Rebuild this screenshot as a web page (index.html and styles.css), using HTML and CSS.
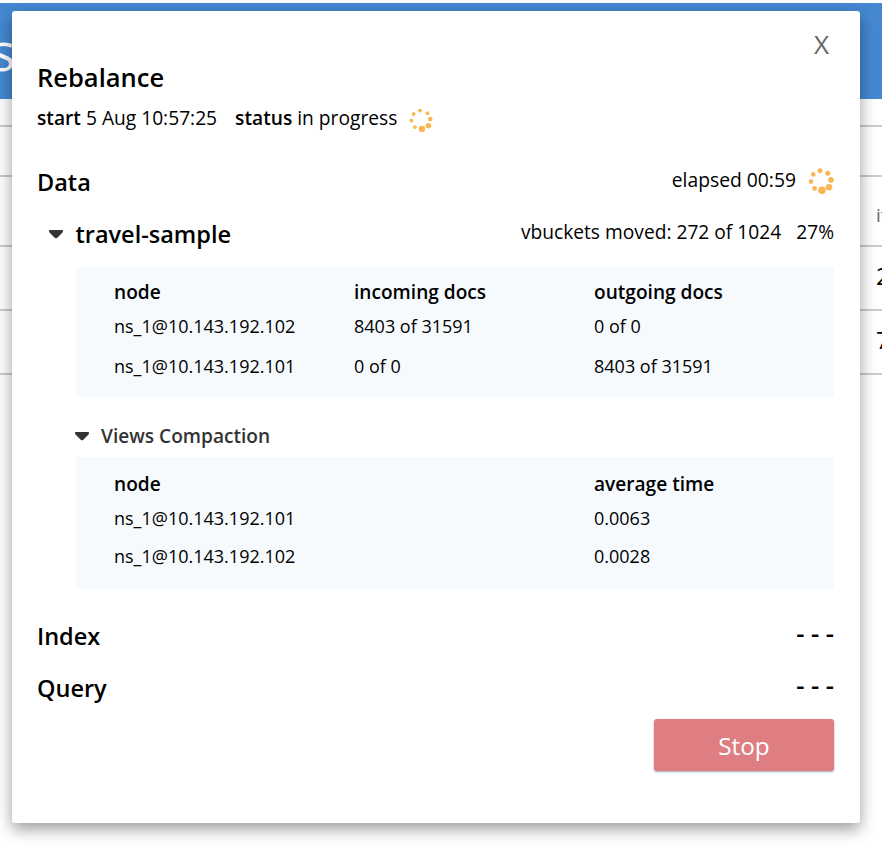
FILE: index.html
```html
<!DOCTYPE html>
<html lang="en">
<head>
<meta charset="utf-8">
<title>Rebalance</title>
<link rel="stylesheet" href="styles.css">
</head>
<body>
<div class="page">
  <header class="banner"><span>s</span></header>
  <div class="rule-row tabs"></div>
  <div class="rule-row filters"></div>
  <div class="rule-row heads"><span class="cell">items</span></div>
  <div class="rule-row item"><span class="cell">2</span></div>
  <div class="rule-row item"><span class="cell">7</span></div>
</div>
<main class="dialog">
  <div class="close-row"><span class="close">X</span></div>
  <h1 class="title"><span>Rebalance</span></h1>
  <div class="status-row">
    <span class="start"><b>start</b> 5 Aug 10:57:25</span>
    <span class="status"><b>status</b> in progress</span>
    <svg class="spin small" viewBox="0 0 26 26"><circle cx="12" cy="2.8" r="2.1"/><circle cx="20" cy="5.7" r="2.1"/><circle cx="23" cy="12" r="2.5"/><circle cx="21" cy="19.3" r="3"/><circle cx="14" cy="22.8" r="3.5"/><circle cx="6.3" cy="20.7" r="2.1"/><circle cx="2.7" cy="13.7" r="2.1"/><circle cx="5" cy="6.5" r="2.1"/></svg>
  </div>
  <section class="section data">
    <h2><span>Data</span></h2>
    <div class="elapsed"><span>elapsed 00:59</span>
      <svg class="spin" viewBox="0 0 26 26"><circle cx="12" cy="2.8" r="2.5"/><circle cx="19.7" cy="5.2" r="2.5"/><circle cx="23" cy="11.8" r="2.9"/><circle cx="21" cy="19.2" r="3.3"/><circle cx="14" cy="22.3" r="3.8"/><circle cx="6.6" cy="20.4" r="2.4"/><circle cx="3" cy="13.6" r="2.3"/><circle cx="5.3" cy="6.4" r="2.3"/></svg>
    </div>
  </section>
  <div class="section bucket">
    <h3><svg class="caret" viewBox="0 0 14 9"><path d="M.6 0H13.4Q14.2 0 14 1.2Q13.8 2.2 13 2.9L8 7.9Q7 8.7 6 7.9L1 2.9Q.2 2.2 0 1.2Q-.2 0 .6 0Z"/></svg><span>travel-sample</span></h3>
    <div class="moved"><span>vbuckets moved: 272 of 1024</span><span>27%</span></div>
  </div>
  <div class="panel docs">
    <b>node</b><b>incoming docs</b><b>outgoing docs</b>
    <span>ns_1@10.143.192.102</span><span>8403 of 31591</span><span>0 of 0</span>
    <span>ns_1@10.143.192.101</span><span>0 of 0</span><span>8403 of 31591</span>
  </div>
  <h4 class="views"><svg class="caret" viewBox="0 0 14 9"><path d="M.6 0H13.4Q14.2 0 14 1.2Q13.8 2.2 13 2.9L8 7.9Q7 8.7 6 7.9L1 2.9Q.2 2.2 0 1.2Q-.2 0 .6 0Z"/></svg><span>Views Compaction</span></h4>
  <div class="panel times">
    <b>node</b><b>average time</b>
    <span>ns_1@10.143.192.101</span><span>0.0063</span>
    <span>ns_1@10.143.192.102</span><span>0.0028</span>
  </div>
  <section class="section index"><h2><span>Index</span></h2><span class="dashes">- - -</span></section>
  <section class="section query"><h2><span>Query</span></h2><span class="dashes">- - -</span></section>
  <div class="actions"><button class="stop">Stop</button></div>
</main>
</body>
</html>
```
FILE: styles.css
```css
* { box-sizing: border-box; }
body {
  margin: 0;
  height: 852px;
  overflow: hidden;
  position: relative;
  background: #fff;
  color: #000;
  font-family: "Open Sans", sans-serif;
  font-size: 19px;
}
h1, h2, h3, h4 { margin: 0; font-weight: 600; }
b { font-weight: 600; }
.page { padding-top: 3px; }
.banner {
  height: 96px;
  background: #4588d2;
  color: #fff;
  font-size: 51px;
  font-weight: 400;
  line-height: 96px;
  overflow: hidden;
}
.banner span { margin-left: -9px; }
.rule-row { border-bottom: 2px solid #ccc; overflow: hidden; display: flex; justify-content: flex-end; }
.tabs { height: 28px; }
.filters { height: 50px; }
.heads { height: 70px; color: #666; font-size: 19px; line-height: 77px; }
.item { height: 64px; font-size: 24px; font-weight: 500; line-height: 58px; }
.cell { width: 6px; }

.dialog {
  position: absolute;
  left: 12px;
  top: 11px;
  width: 848px;
  height: 812px;
  padding: 0 26px 0 25px;
  background: #fff;
  border-radius: 3px;
  box-shadow: 0 6px 16px rgba(0, 0, 0, .4);
}
.close-row { height: 50px; display: flex; justify-content: flex-end; padding: 16px 5px 0 0; }
.close { color: #666; font-size: 26px; line-height: 35px; }
.title { height: 34px; line-height: 33px; font-size: 25.5px; }
.status-row { height: 45px; margin-bottom: 1px; display: flex; align-items: center; font-size: 19.2px; }
.status { margin-left: 18px; }
.spin { width: 26px; height: 26px; fill: #f8b754; flex: none; }
.small { width: 24px; height: 24px; margin-left: 12px; margin-top: 4px; }
.section { display: flex; justify-content: space-between; align-items: center; }
.section h2, .section h3 { font-size: 23.5px; line-height: 52px; }
.data { height: 62px; padding-top: 20px; }
.elapsed { display: flex; align-items: center; gap: 12px; font-size: 19.3px; margin-top: -4px; }
.elapsed span { margin-top: -2px; }
.elapsed .spin { margin-top: 1px; }
.bucket { height: 62px; }
.bucket h3 { display: flex; align-items: center; gap: 12.5px; padding-left: 12px; }
.bucket .caret { margin-top: 1px; }
.moved { display: flex; gap: 15px; margin-top: -6px; font-size: 19.2px; }
.caret { width: 14px; height: 9px; fill: #333; flex: none; }
.panel { margin-left: 39px; background: #f6fafd; display: grid; padding-left: 38px; font-size: 18px; align-items: center; }
.panel b { font-size: 19.1px; }
.panel span { margin-top: -2px; }
.docs { margin-top: 2px; height: 130px; grid-template-columns: 240px 240px 1fr; grid-template-rows: 30px 40px 40px; padding-top: 10px; }
.views { height: 60px; padding: 18px 0 0 38px; display: flex; align-items: center; gap: 12px; font-size: 19.1px; color: #333; }
.times { height: 132px; grid-template-columns: 480px 1fr; grid-template-rows: 32px 38px 38px; padding-top: 11px; }
.index { height: 52px; margin-top: 21px; }
.query { height: 52px; }
.dashes { font-size: 25.5px; font-weight: 600; margin-top: -7px; }
.actions { display: flex; justify-content: flex-end; padding-top: 5px; }
.stop {
  width: 180px;
  height: 52px;
  border: 0;
  border-radius: 3px;
  background: #de7e83;
  color: #fff;
  font: 400 24.3px "Open Sans", sans-serif;
  padding: 1px 0 0;
  box-shadow: 0 1px 2px rgba(0, 0, 0, .35);
}
```
